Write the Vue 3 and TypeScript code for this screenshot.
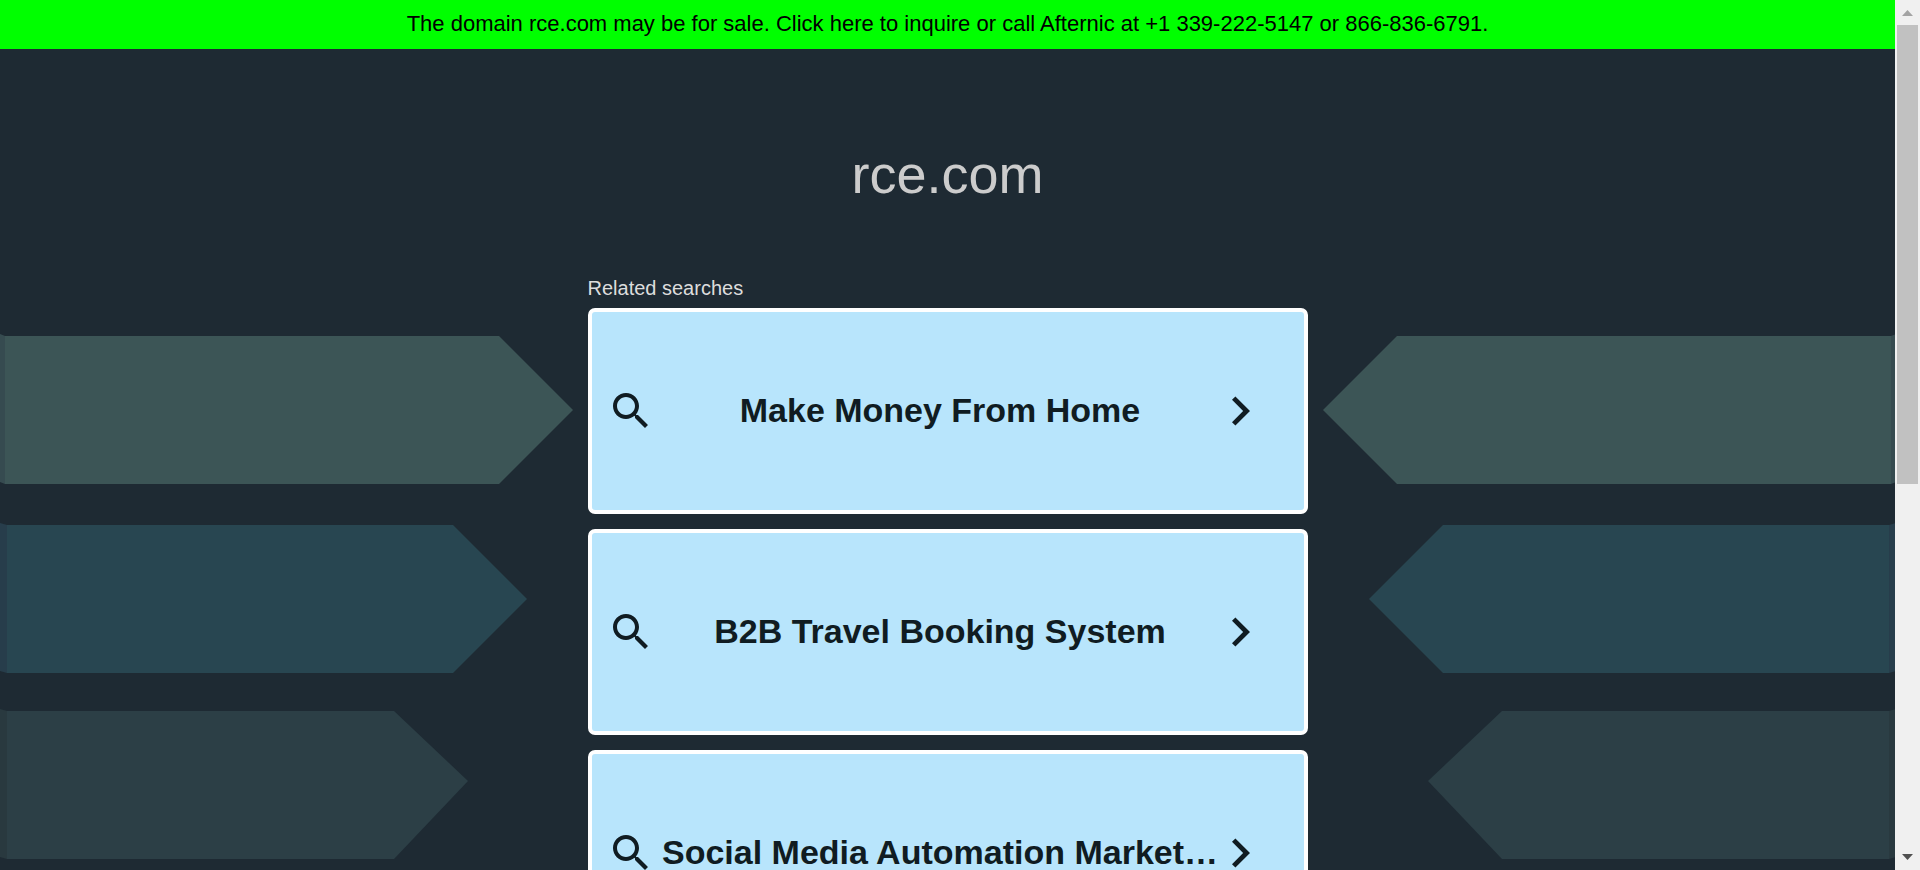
<script setup lang="ts">
interface RelatedSearch {
  id: number
  label: string
}

interface ArrowBand {
  fill: string
  edge: string
  left: string
  leftEdge: string
  right: string
  rightEdge: string
}

const MIRROR_WIDTH = 1896

const searches: RelatedSearch[] = [
  { id: 1, label: 'Make Money From Home' },
  { id: 2, label: 'B2B Travel Booking System' },
  { id: 3, label: 'Social Media Automation Market…' },
]

function band(
  top: number, middle: number, bottom: number,
  edgeWidth: number, shoulder: number, tip: number,
  fill: string, edge: string,
): ArrowBand {
  const body = [[edgeWidth, top], [shoulder, top], [tip, middle], [shoulder, bottom], [edgeWidth, bottom]]
  const fold = [[0, top - 2], [edgeWidth, top], [edgeWidth, bottom], [0, bottom - 2]]
  const points = (list: number[][]) => list.map((p) => p.join(',')).join(' ')
  const mirrored = (list: number[][]) => list.map(([x, y]) => [MIRROR_WIDTH - x, y])
  return {
    fill,
    edge,
    left: points(body),
    leftEdge: points(fold),
    right: points(mirrored(body)),
    rightEdge: points(mirrored(fold)),
  }
}

const bands: ArrowBand[] = [
  band(336, 410, 484, 5, 499, 573, '#3c5556', '#364b50'),
  band(525, 599, 673, 7, 453, 527, '#284651', '#273d4b'),
  band(711, 781, 859, 7, 394, 468, '#2c3f46', '#29393f'),
]
</script>

<template>
  <div class="window">
    <div class="page">
      <a class="banner" href="#inquire">The domain rce.com may be for sale. Click here to inquire or call Afternic at +1 339-222-5147 or 866-836-6791.</a>

      <svg class="backdrop" viewBox="0 0 1895 870" aria-hidden="true">
        <g v-for="item in bands" :key="item.left">
          <polygon :points="item.leftEdge" :fill="item.edge" />
          <polygon :points="item.left" :fill="item.fill" />
          <polygon :points="item.rightEdge" :fill="item.edge" />
          <polygon :points="item.right" :fill="item.fill" />
        </g>
      </svg>

      <main class="content">
        <h1 class="domain">rce.com</h1>
        <h2 class="heading">Related searches</h2>
        <nav class="list" aria-label="Related searches">
          <a v-for="search in searches" :key="search.id" class="card" href="#search">
            <svg class="magnifier" viewBox="0 0 24 24" aria-hidden="true">
              <path d="M15.5 14h-.79l-.28-.27C15.41 12.59 16 11.11 16 9.5 16 5.91 13.09 3 9.5 3S3 5.91 3 9.5 5.91 16 9.5 16c1.61 0 3.09-.59 4.23-1.57l.27.28v.79l5 4.99L20.49 19l-4.99-5zm-6 0C7.01 14 5 11.99 5 9.5S7.01 5 9.5 5 14 7.01 14 9.5 11.99 14 9.5 14z" />
            </svg>
            <span class="label">{{ search.label }}</span>
            <svg class="chevron" viewBox="8.59 6 7.41 12" aria-hidden="true">
              <path d="M10 6L8.59 7.41 13.17 12l-4.58 4.59L10 18l6-6z" />
            </svg>
          </a>
        </nav>
      </main>
    </div>

    <div class="scrollbar" aria-hidden="true">
      <svg class="arrow" viewBox="0 0 25 25"><path d="M7 16L12.500 10L18 16z" fill="#a3a3a3" /></svg>
      <div class="track"><div class="thumb"></div></div>
      <svg class="arrow" viewBox="0 0 25 25"><path d="M7 9L12.500 15L18 9z" fill="#505050" /></svg>
    </div>
  </div>
</template>

<style>
body {
  margin: 0;
  background: #1e2a33;
}
</style>

<style scoped>
.window {
  display: flex;
  height: 100vh;
  overflow: hidden;
  font-family: "Liberation Sans", Arial, sans-serif;
}

.page {
  position: relative;
  flex: 1;
  min-width: 0;
  overflow: hidden;
  background: #1e2a33;
}

.banner {
  display: block;
  padding: 10px 16px 11px;
  background: #00ff00;
  color: #000;
  font-size: 22px;
  line-height: 28px;
  text-align: center;
  text-decoration: none;
}

.backdrop {
  position: absolute;
  top: 0;
  left: 0;
  width: 100%;
  height: auto;
}

.content {
  position: relative;
  box-sizing: border-box;
  width: 100%;
  max-width: 720px;
  margin: 0 auto;
  padding-top: 93px;
}

.domain {
  margin: 0;
  color: #ccc;
  font-size: 54px;
  font-weight: 400;
  line-height: 64px;
  text-align: center;
}

.heading {
  margin: 70px 0 7px;
  color: #ddd;
  font-size: 20px;
  font-weight: 400;
  line-height: 25px;
}

.list {
  display: flex;
  flex-direction: column;
  gap: 15px;
}

.card {
  display: flex;
  align-items: center;
  box-sizing: border-box;
  height: 206px;
  padding: 0 54px 0 15px;
  border: 4px solid #fff;
  border-radius: 7px;
  background: #b8e5fc;
  color: #101c22;
  text-decoration: none;
}

.magnifier {
  flex: none;
  width: 48px;
  height: 48px;
  fill: currentColor;
}

.label {
  flex: 1;
  min-width: 0;
  padding: 0 8px 3px 2px;
  font-size: 34px;
  font-weight: 700;
  line-height: 42px;
  text-align: center;
  white-space: nowrap;
}

.chevron {
  flex: none;
  width: 18px;
  height: 30px;
  fill: currentColor;
}

.scrollbar {
  display: flex;
  flex: none;
  flex-direction: column;
  width: 25px;
  background: #f0f0f0;
}

.arrow {
  width: 25px;
  height: 25px;
}

.track {
  flex: 1;
  padding: 0 2px;
}

.thumb {
  height: 56%;
  background: #c1c1c1;
}
</style>
